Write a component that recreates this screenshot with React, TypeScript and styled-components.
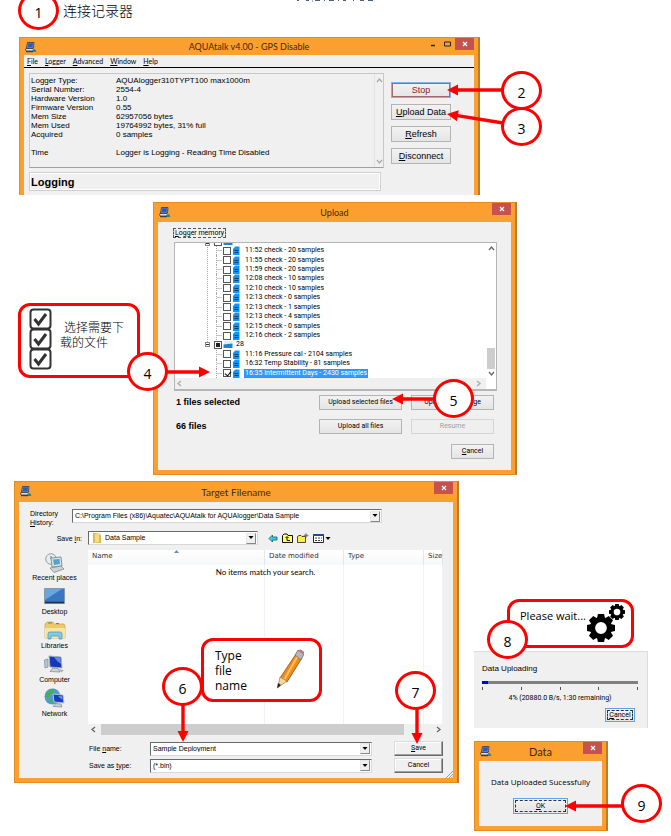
import React, { useState } from 'react';
import styled, { createGlobalStyle, css } from 'styled-components';

const GlobalStyle = createGlobalStyle`
  * { box-sizing: border-box; }
  body { margin: 0; background: #fff; color: #000; overflow-x: hidden; }
  button, input, select { font: inherit; color: inherit; margin: 0; }
`;

const ui = '"Open Sans", "Noto Sans", sans-serif';
const caption = 'Lato, "Open Sans", sans-serif';
const sans = '"Liberation Sans", Arial, sans-serif';
const narrow = 'Roboto, "Liberation Sans", sans-serif';
const cjk = '"Noto Sans CJK SC", sans-serif';
const RED = '#fd0000';

/* ---------- page ---------- */

const Page = styled.main`
  position: relative;
  overflow: hidden;
  padding-bottom: 5px;
  font-family: ${sans};
  font-size: 8px;
  line-height: 9px;
`;

const Intro = styled.header`
  position: relative;
  height: 37px;
  padding: 0 0 0 63px;
`;

const IntroTitle = styled.h1`
  margin: 0;
  font: 300 14px/20px ${cjk};
`;

const Traces = styled.svg`
  position: absolute;
  top: 0;
  left: 297px;
`;

const Figure = styled.section<{ $left: number; $width: number; $top?: number }>`
  position: relative;
  width: 100%;
  max-width: ${p => p.$width}px;
  margin-left: ${p => p.$left}px;
  margin-top: ${p => p.$top || 0}px;
`;

const BottomRow = styled.div`
  display: flex;
  align-items: flex-start;
  gap: 15px;
  margin: 6px 0 0 14px;
`;

const SideColumn = styled.div`
  flex: 0 1 174px;
  padding-top: 170px;
`;

/* ---------- annotations ---------- */

const Marker = styled.span<{ $x: number; $y: number }>`
  position: absolute;
  left: ${p => p.$x}px;
  top: ${p => p.$y}px;
  z-index: 3;
  display: flex;
  align-items: center;
  justify-content: center;
  width: 41px;
  height: 39px;
  padding-top: 4px;
  border: 3px solid ${RED};
  border-radius: 50%;
  background: #fff;
  font: 14px/16px ${ui};
`;

const ArrowSvg = styled.svg<{ $x: number; $y: number }>`
  position: absolute;
  left: ${p => p.$x}px;
  top: ${p => p.$y}px;
  z-index: 2;
  overflow: visible;
`;

type ArrowProps = { x: number; y: number; dx: number; dy: number };

/* x,y is the tip; dx,dy leads back to the tail */
function Arrow({ x, y, dx, dy }: ArrowProps) {
  const length = Math.hypot(dx, dy);
  const angle = (Math.atan2(dy, dx) * 180) / Math.PI;
  return (
    <ArrowSvg $x={x} $y={y} width="1" height="1" aria-hidden="true">
      <g transform={`rotate(${angle})`} fill={RED}>
        <path d="M0 0 11-5.5V5.5Z" />
        <path d={`M9-1.7H${length}V1.7H9Z`} />
      </g>
    </ArrowSvg>
  );
}

const Callout = styled.aside<{ $x: number; $y: number; $w: number; $h: number }>`
  position: absolute;
  left: ${p => p.$x}px;
  top: ${p => p.$y}px;
  z-index: 1;
  display: flex;
  width: ${p => p.$w}px;
  height: ${p => p.$h}px;
  border: 3px solid ${RED};
  border-radius: 12px;
  background: #fff;
`;

const PickText = styled.p`
  margin: 13px 0 0 7px;
  font: 300 12px/15px ${cjk};
  text-indent: 4px;
`;

const TypeText = styled.p`
  width: 44px;
  margin: 7px 16px 0 11px;
  font: 12px/15px ${ui};
`;

const WaitText = styled.p`
  margin: 6px 0 0 10px;
  font: 11px/15px ${ui};
  white-space: nowrap;
`;

const ChecksSvg = styled.svg`
  margin: 2px 0 0 8px;
  flex: none;
`;

const PencilSvg = styled.svg`
  margin-top: 8px;
`;

const GearsSvg = styled.svg`
  position: absolute;
  right: 5px;
  top: 0;
`;

/* ---------- window frame ---------- */

const Frame = styled.div<{ $open?: boolean }>`
  padding: 0 4px ${p => (p.$open ? 0 : 4)}px 4px;
  border: solid #e28c22;
  border-width: 1px 2px ${p => (p.$open ? 0 : 1)}px 1px;
  border-right-color: #bd7a27;
  background: #fc9f31;
`;

const TitleBar = styled.div<{ $h: number }>`
  position: relative;
  display: flex;
  align-items: center;
  justify-content: center;
  height: ${p => p.$h}px;
  color: #3f2a10;
`;

const Title = styled.h2<{ $size?: number }>`
  margin: 0;
  font: ${p => p.$size || 9}px/14px ${caption};
`;

const TitleIcon = styled.svg`
  position: absolute;
  left: 1px;
  top: 4px;
`;

const WindowButtons = styled.div`
  position: absolute;
  right: 0;
  top: 0;
  display: flex;
`;

const CaptionButton = styled.button<{ $close?: boolean }>`
  display: flex;
  align-items: center;
  justify-content: center;
  width: ${p => (p.$close ? 19 : 15)}px;
  height: 12px;
  padding: 0;
  border: 0;
  background: ${p => (p.$close ? '#c75050' : 'transparent')};
`;

const Client = styled.div`
  background: #f0f0f0;
`;

function PcIcon() {
  return (
    <TitleIcon width="12" height="11" viewBox="0 0 12 11" aria-hidden="true">
      <path d="M2.5.5H9L8.5 6H1.5Z" fill="#8fa5b6" stroke="#293b55" strokeWidth=".8" />
      <path d="M3.3 1.3H8L7.6 5H2.6Z" fill="#2559c8" />
      <path d="M1 6.5H8L10.5 9H1.5L.5 8Z" fill="#d9e0e5" stroke="#27313f" strokeWidth=".8" />
      <path d="M7 8 10 7 11.5 10H8Z" fill="#258a93" />
      <path d="M1 9.7H8" stroke="#27313f" />
    </TitleIcon>
  );
}

function CloseButton() {
  return (
    <CaptionButton $close aria-label="Close">
      <svg width="6" height="6" viewBox="0 0 6 6"><path d="M1 1 5 5M5 1 1 5" stroke="#fff" strokeWidth="1.2" /></svg>
    </CaptionButton>
  );
}

/* ---------- controls ---------- */

const Button = styled.button<{ $w?: number; $h?: number; $look?: 'focus' | 'classic'; $size?: number; $stop?: boolean }>`
  display: flex;
  align-items: center;
  justify-content: center;
  width: ${p => (p.$w ? p.$w + 'px' : '100%')};
  height: ${p => p.$h || 15}px;
  padding: 0;
  border: 1px solid #b4b4b4;
  background: linear-gradient(#f2f2f2, #e5e5e5);
  white-space: nowrap;
  font-family: ${p => ((p.$size || 7) > 8 ? sans : narrow)};
  font-size: ${p => p.$size || 7}px;
  line-height: 11px;
  &:disabled { color: #a0a0a0; border-color: #d5d5d5; background: #efefef; }
  ${p => p.$look === 'focus' && css`
    border-color: #5aa5ea;
    outline: 1px dashed #333;
    outline-offset: -3px;
  `}
  ${p => p.$look === 'classic' && css`
    border: 1px solid;
    border-color: #dcdcdc #696969 #696969 #dcdcdc;
    box-shadow: inset -1px -1px #a0a0a0, inset 1px 1px #fff;
    background: #f0f0f0;
  `}
  ${p => p.$stop && css`
    color: #8b1a1a;
    border-color: #7eb4ea;
    box-shadow: inset 0 0 0 1px #a56a70;
  `}
`;

/* ---------- logger window ---------- */

const MenuBar = styled.nav`
  display: flex;
  gap: 7px;
  height: 13px;
  padding-left: 3px;
  border-bottom: 1px solid #000;
`;

const MenuItem = styled.button`
  padding: 0;
  border: 0;
  background: none;
  font: 7px/11px ${caption};
`;

const LoggerBody = styled.div`
  display: grid;
  grid-template-columns: 1fr 60px;
  gap: 7px;
  padding: 5px 23px 4px 5px;
`;

const LoggerMain = styled.div`
  display: flex;
  flex-direction: column;
  gap: 4px;
`;

const InfoPanel = styled.div`
  display: flex;
  justify-content: space-between;
  height: 95px;
  border: 1px solid #c8c8c8;
  border-bottom-color: #a0a0a0;
`;

const InfoTable = styled.table`
  margin: 2px 1px 0;
  border-collapse: collapse;
  align-self: flex-start;
  th, td { padding: 0; height: 9px; font-weight: normal; text-align: left; white-space: nowrap; }
  th { width: 85px; }
  tr:last-child th, tr:last-child td { padding-top: 9px; }
`;

const ThinScroll = styled.div`
  display: flex;
  flex-direction: column;
  justify-content: space-between;
  align-items: center;
  width: 9px;
  padding: 3px 0 2px;
  border-left: 1px solid #e2e2e2;
`;

const StatusBox = styled.div`
  height: 19px;
  margin-right: 3px;
  padding-left: 1px;
  border: 1px solid #d0d0d0;
  box-shadow: inset 0 0 0 1px #fff;
  font: bold 11px/18px ${sans};
`;

const LoggerButtons = styled.div`
  display: flex;
  flex-direction: column;
  gap: 6px;
  padding-top: 9px;
`;

function Chevron({ dir, color = '#666' }: { dir: 'up' | 'down' | 'left' | 'right'; color?: string }) {
  const paths = { up: 'M1 5 3.5 2 6 5', down: 'M1 2 3.5 5 6 2', left: 'M5 1 2 3.5 5 6', right: 'M2 1 5 3.5 2 6' };
  return <svg width="7" height="7" viewBox="0 0 7 7" aria-hidden="true"><path d={paths[dir]} fill="none" stroke={color} strokeWidth="1.3" /></svg>;
}

const info = [
  ['Logger Type:', 'AQUAlogger310TYPT100 max1000m'],
  ['Serial Number:', '2554-4'],
  ['Hardware Version', '1.0'],
  ['Firmware Version', '0.55'],
  ['Mem Size', '62957056 bytes'],
  ['Mem Used', '19764992 bytes, 31% full'],
  ['Acquired', '0 samples'],
  ['Time', 'Logger is Logging - Reading Time Disabled'],
];

function LoggerWindow() {
  return (
    <Frame $open>
      <TitleBar $h={17}>
        <PcIcon />
        <Title>AQUAtalk v4.00 - GPS Disable</Title>
        <WindowButtons>
          <CaptionButton aria-label="Minimize">
            <svg width="6" height="6"><path d="M1 4.5H5" stroke="#222" strokeWidth="1.4" /></svg>
          </CaptionButton>
          <CaptionButton aria-label="Maximize">
            <svg width="7" height="6"><path d="M.5 1H6.5V5H.5Z" fill="none" stroke="#222" /></svg>
          </CaptionButton>
          <CloseButton />
        </WindowButtons>
      </TitleBar>
      <Client>
        <MenuBar>
          <MenuItem><u>F</u>ile</MenuItem>
          <MenuItem><u>L</u>ogger</MenuItem>
          <MenuItem><u>A</u>dvanced</MenuItem>
          <MenuItem><u>W</u>indow</MenuItem>
          <MenuItem><u>H</u>elp</MenuItem>
        </MenuBar>
        <LoggerBody>
          <LoggerMain>
            <InfoPanel>
              <InfoTable>
                <tbody>
                  {info.map(([k, v]) => <tr key={k}><th scope="row">{k}</th><td>{v}</td></tr>)}
                </tbody>
              </InfoTable>
              <ThinScroll><Chevron dir="up" color="#aaa" /><Chevron dir="down" color="#aaa" /></ThinScroll>
            </InfoPanel>
            <StatusBox>Logging</StatusBox>
          </LoggerMain>
          <LoggerButtons>
            <Button $h={16} $size={9} $stop>Stop</Button>
            <Button $h={16} $size={9}><span><u>U</u>pload Data</span></Button>
            <Button $h={16} $size={9}><span><u>R</u>efresh</span></Button>
            <Button $h={16} $size={9}><span><u>D</u>isconnect</span></Button>
          </LoggerButtons>
        </LoggerBody>
      </Client>
    </Frame>
  );
}

/* ---------- upload window ---------- */

const UploadBody = styled(Client)`
  padding: 6px 14px 11px 15px;
  font: 7px/9px ${narrow};
`;

const GroupLabel = styled.h3`
  width: max-content;
  height: 10px;
  margin: 0 0 4px;
  padding: 0 1px;
  border: 1px dashed #555;
  font: 7px/8px ${narrow};
`;

const Tree = styled.div`
  display: grid;
  grid-template: 1fr 11px / 1fr 10px;
  height: 149px;
  margin-left: 1px;
  border: 1px solid #b5b5b5;
  border-width: 1px 1px 2px 1px;
  background: #fff;
`;

const TreeRows = styled.ul`
  display: grid;
  grid-template-rows: 3px;
  grid-auto-rows: 1fr;
  margin: 0;
  padding: 0 0 0 30px;
  list-style: none;
  overflow: hidden;
  background: repeating-linear-gradient(#aaa 0 1px, #fff 1px 2px) 32px 0 / 1px 100px no-repeat;
`;

const TreeRow = styled.li<{ $parent?: boolean; $cut?: boolean }>`
  display: flex;
  align-items: ${p => (p.$cut ? 'flex-end' : 'center')};
  padding-left: ${p => (p.$parent ? 0 : 11)}px;
  min-height: 0;
  ${p => p.$cut && 'overflow: hidden;'}
  > svg { flex: none; }
  &::before {
    content: '';
    flex: none;
    width: ${p => (p.$parent ? 0 : 6)}px;
    align-self: stretch;
    border-left: ${p => (p.$parent ? 0 : 1)}px dotted #aaa;
    background: linear-gradient(#c8c8c8, #c8c8c8) 0 50% / 5px 1px no-repeat;
  }
`;

const Expander = styled.button`
  display: flex;
  flex: none;
  width: 5px;
  height: 5px;
  margin-right: 4px;
  padding: 0;
  border: 1px solid #888;
  background: linear-gradient(#333, #333) 50% 50% / 3px 1px no-repeat, #fff;
`;

const TreeCheck = styled.input<{ $mixed?: boolean }>`
  appearance: none;
  position: relative;
  flex: none;
  width: 8px;
  height: 8px;
  margin-right: 1px;
  border: 1px solid #555;
  background: #fff;
  &:checked::after {
    content: '';
    position: absolute;
    left: 2px;
    top: 0;
    width: 3px;
    height: 5px;
    border: solid #000;
    border-width: 0 1px 1px 0;
    transform: rotate(40deg);
  }
  ${p => p.$mixed && css`
    background: linear-gradient(#222, #222) 50% 50% / 4px 4px no-repeat, #fff;
    &:checked::after { display: none; }
  `}
`;

const TreeLabel = styled.label<{ $selected?: boolean; $near?: boolean }>`
  padding: 0 1px;
  margin-left: ${p => (p.$near ? 2 : 4)}px;
  white-space: nowrap;
  line-height: 9px;
  ${p => p.$selected && css`
    color: #fff;
    background: #3399ff;
    outline: 1px dotted #c56a10;
    outline-offset: -1px;
  `}
`;

const VScroll = styled.div`
  display: flex;
  flex-direction: column;
  align-items: center;
  padding: 2px 0 1px;
`;

const VThumb = styled.div`
  width: 8px;
  height: 21px;
  margin-top: auto;
  margin-bottom: 1px;
  background: #cdcdcd;
`;

const HScroll = styled.div`
  display: flex;
  align-items: center;
  justify-content: space-between;
  padding: 0 4px 0 1px;
  background: #f0f0f0;
`;

const UploadActions = styled.div`
  display: grid;
  grid-template-columns: 1fr 83px 83px;
  gap: 9px;
  align-items: center;
  margin: 4px 3px 10px 3px;
`;

const Count = styled.strong`
  font: bold 9px/11px ${sans};
`;

const RightAlign = styled.div`
  display: flex;
  justify-content: flex-end;
  margin-right: 3px;
`;

function FileIcon() {
  return (
    <svg width="8" height="9" viewBox="0 0 8 9" aria-hidden="true">
      <path d="M3 .5H7.500V9H1V3Z" fill="#1494f4" />
      <path d="M2.500 4.5H6.500M2.500 6.500H6.500" stroke="#03426f" />
    </svg>
  );
}

function DayIcon() {
  return (
    <svg width="10" height="9" viewBox="0 0 10 9" aria-hidden="true">
      <path d="M1 1H9V8H1Z" fill="#d8eefc" />
      <path d="M.5 4.500 9.500 3.500V8H.5Z" fill="#1683dc" />
    </svg>
  );
}

const checks = [
  '11:52 check - 20 samples', '11:55 check - 20 samples', '11:59 check - 20 samples', '12:08 check - 10 samples',
  '12:10 check - 10 samples', '12:13 check - 0 samples', '12:13 check - 1 samples', '12:13 check - 4 samples',
  '12:15 check - 0 samples', '12:16 check - 2 samples',
];
const days = ['11:16 Pressure cal - 2104 samples', '16:32 Temp Stability - 81 samples', '16:35 Intermittent Days - 2430 samples'];

function TreeItem({ text, selected }: { text: string; selected?: boolean }) {
  const id = 'file-' + text.replace(/\W+/g, '-');
  return (
    <TreeRow>
      <TreeCheck type="checkbox" id={id} defaultChecked={selected} />
      <FileIcon />
      <TreeLabel htmlFor={id} $selected={selected}>{text}</TreeLabel>
    </TreeRow>
  );
}

function UploadWindow() {
  return (
    <Frame>
      <TitleBar $h={19}>
        <PcIcon />
        <Title>Upload</Title>
        <WindowButtons><CloseButton /></WindowButtons>
      </TitleBar>
      <UploadBody>
        <GroupLabel><u>L</u>ogger memory</GroupLabel>
        <Tree>
          <TreeRows>
            <TreeRow $parent $cut>
              <Expander aria-label="Collapse day" />
              <TreeCheck type="checkbox" aria-label="Day" />
              <DayIcon />
            </TreeRow>
            {checks.map(t => <TreeItem key={t} text={t} />)}
            <TreeRow $parent>
              <Expander aria-label="Collapse 28" />
              <TreeCheck type="checkbox" id="day-28" defaultChecked $mixed />
              <DayIcon />
              <TreeLabel htmlFor="day-28" $near>28</TreeLabel>
            </TreeRow>
            {days.map((t, i) => <TreeItem key={t} text={t} selected={i === 2} />)}
          </TreeRows>
          <VScroll><Chevron dir="up" /><VThumb /><Chevron dir="down" /></VScroll>
          <HScroll><Chevron dir="left" color="#aaa" /><Chevron dir="right" color="#aaa" /></HScroll>
        </Tree>
        <UploadActions>
          <Count>1 files selected</Count>
          <Button>Upload selected files</Button>
          <Button>Upload date range</Button>
          <Count>66 files</Count>
          <Button>Upload all files</Button>
          <Button disabled>Resume</Button>
        </UploadActions>
        <RightAlign><Button $w={43}><span><u>C</u>ancel</span></Button></RightAlign>
      </UploadBody>
    </Frame>
  );
}

/* ---------- save dialog ---------- */

const SaveBody = styled(Client)`
  position: relative;
  padding: 7px 9px 5px;
  font: 7px/9px ${sans};
`;

const DirectoryRow = styled.div`
  display: grid;
  grid-template-columns: 42px minmax(0, 310px);
  align-items: start;
  padding-left: 2px;
`;

const SaveInRow = styled.div`
  display: grid;
  grid-template-columns: 56px minmax(0, 170px) auto;
  gap: 4px;
  align-items: center;
  margin: 4px 0 5px;
  > label { text-align: right; padding-right: 2px; }
`;

const Combo = styled.div`
  display: flex;
  align-items: center;
  height: 14px;
  padding: 1px;
  border: 1px solid;
  border-color: #696969 #d8d8d8 #d8d8d8 #696969;
  background: #fff;
`;

const Select = styled.select`
  appearance: none;
  flex: 1;
  min-width: 0;
  height: 10px;
  padding: 0 1px;
  border: 0;
  background: transparent;
  line-height: 10px;
`;

const Input = styled.input`
  flex: 1;
  min-width: 0;
  height: 10px;
  padding: 0 1px;
  border: 0;
  background: transparent;
  outline: none;
`;

const DropBox = styled.span`
  display: flex;
  align-items: center;
  justify-content: center;
  width: 10px;
  height: 11px;
  border: 1px solid;
  border-color: #e8e8e8 #888 #888 #e8e8e8;
  background: #f0f0f0;
`;

const Tools = styled.div`
  display: flex;
  gap: 4px;
  margin-left: 6px;
`;

const ToolButton = styled.button`
  display: flex;
  padding: 0;
  border: 0;
  background: none;
`;

const SaveMain = styled.div`
  display: grid;
  grid-template-columns: 56px minmax(0, 1fr);
  gap: 4px;
`;

const Places = styled.nav`
  display: grid;
  grid-template-rows: repeat(5, 34px);
  margin-left: -3px;
`;

const Place = styled.button`
  display: flex;
  flex-direction: column;
  align-items: center;
  justify-content: flex-end;
  padding: 0 0 2px;
  border: 0;
  background: none;
  line-height: 9px;
  white-space: nowrap;
  svg { flex: none; }
`;

const FileArea = styled.div`
  position: relative;
  display: flex;
  flex-direction: column;
  min-width: 0;
  margin-right: 1px;
`;

const FileTable = styled.table`
  width: 100%;
  height: 174px;
  border-collapse: collapse;
  table-layout: fixed;
  background: #fff;
  th {
    height: 15px;
    padding: 0 0 2px 4px;
    border-right: 1px solid #dfe8f2;
    background: linear-gradient(#fff, #f6f7f9);
    font: 7px/11px "DejaVu Sans", sans-serif;
    color: #333;
    text-align: left;
  }
  td { padding: 0; border-right: 1px solid #eef3f9; }
`;

const SortMark = styled.svg`
  position: absolute;
  left: 86px;
  top: 0;
`;

const EmptyNote = styled.p`
  position: absolute;
  inset: 17px 0 auto;
  margin: 0;
  font: 8px/11px ${caption};
  text-align: center;
`;

const ListScroll = styled.div`
  display: grid;
  grid-template-columns: 11px 1fr 39px;
  align-items: center;
  height: 11px;
  padding-left: 2px;
  > div { height: 11px; background: #cdcdcd; }
  > svg:last-child { justify-self: end; margin-right: 1px; }
`;

const NameGrid = styled.div`
  display: grid;
  grid-template-columns: 57px minmax(0, 1fr) 49px;
  gap: 2px 4px;
  align-items: center;
  padding: 6px 1px 0 61px;
`;

const ComboSlot = styled.div`
  padding-right: 18px;
`;

const Grip = styled.svg`
  position: absolute;
  right: 0;
  bottom: 0;
`;

function Drop() {
  return <DropBox aria-hidden="true"><svg width="6" height="4"><path d="M.5 0H5.500L3 3Z" fill="#000" /></svg></DropBox>;
}

function RecentIcon() {
  return (
    <svg width="21" height="20" viewBox="0 0 21 20" aria-hidden="true">
      <circle cx="7" cy="6" r="5.3" fill="#e6edf0" stroke="#93a0a6" />
      <path d="M7 3V6H9.500" stroke="#3f718f" fill="none" />
      <path d="M7 5 17 4 18 13 8 14Z" fill="#d9e3e8" stroke="#85949b" />
      <path d="M9 6.500 15.500 6 16 11 10 12Z" fill="#4fa5cf" />
      <path d="M6 15 17 13 20 16 10 19.500Z" fill="#cbd1d4" stroke="#777f82" strokeWidth=".7" />
    </svg>
  );
}
function DesktopIcon() {
  return (
    <svg width="21" height="19" viewBox="0 0 21 19" aria-hidden="true">
      <path d="M.5.5H20.500V15.500H.5Z" fill="#3a76c2" stroke="#8799a6" />
      <path d="M1 1H18Q10 6 1 12Z" fill="#6aa5df" />
      <path d="M1 14.500H20" stroke="#20323f" strokeWidth="1.500" />
    </svg>
  );
}
function LibrariesIcon() {
  return (
    <svg width="22" height="20" viewBox="0 0 22 20" aria-hidden="true">
      <path d="M1 3 3 1H9L10 3H20L21 5V17H1Z" fill="#ecca6a" stroke="#c2a355" strokeWidth=".7" />
      <path d="M4 2H8" stroke="#4a9b4c" /><path d="M12 2.500H15" stroke="#d65e3e" />
      <path d="M1 7H21V17H1Z" fill="#f8e5a4" />
      <path d="M4 18V13Q4 11 6 11H16Q18 11 18 13V18H15V15H7V18Z" fill="#86c9e6" stroke="#4c9dc3" strokeWidth=".8" />
    </svg>
  );
}
function ComputerIcon() {
  return (
    <svg width="21" height="20" viewBox="0 0 21 20" aria-hidden="true">
      <path d="M.5 5 4 4V12L1 13Z" fill="#b8c7d1" stroke="#788791" strokeWidth=".7" />
      <path d="M5 1 17 2 18 13 6 12Z" fill="#1537b8" stroke="#9fb1bd" />
      <path d="M10 2 16.500 2.500 17 9Q13 7 10 2Z" fill="#6387ea" />
      <path d="M9 13 14 13.500 16 17 6 16.500Z" fill="#cdd4d8" stroke="#7e878d" strokeWidth=".7" />
      <path d="M15 14 20 15.500 17 17.500Z" fill="#a6afb4" />
    </svg>
  );
}
function NetworkIcon() {
  return (
    <svg width="21" height="21" viewBox="0 0 21 21" aria-hidden="true">
      <circle cx="8.500" cy="8.500" r="8" fill="#4f9cd0" />
      <path d="M3 4Q7 0 11 1L9 5 6 6 5 10 1 9ZM4 13 8 11 9 16Z" fill="#4cae51" />
      <path d="M9 6 19 7 20 15 10 14Z" fill="#1a3dbd" stroke="#b5c4cf" />
      <path d="M14 8 18 8.300 18.500 12Z" fill="#7595ea" />
      <path d="M12 15.500 17 16 18 19 9 18.500Z" fill="#c7ced2" stroke="#818b91" strokeWidth=".7" />
    </svg>
  );
}

const places: [string, () => React.ReactElement][] = [
  ['Recent places', RecentIcon], ['Desktop', DesktopIcon], ['Libraries', LibrariesIcon],
  ['Computer', ComputerIcon], ['Network', NetworkIcon],
];

function SaveWindow() {
  const [name, setName] = useState('Sample Deployment');
  return (
    <Frame>
      <TitleBar $h={20}>
        <PcIcon />
        <Title $size={10}>Target Filename</Title>
        <WindowButtons><CloseButton /></WindowButtons>
      </TitleBar>
      <SaveBody>
        <DirectoryRow>
          <label htmlFor="directory">Directory<br /><u>H</u>istory:</label>
          <Combo>
            <Select id="directory"><option>C:\Program Files (x86)\Aquatec\AQUAtalk for AQUAlogger\Data Sample</option></Select>
            <Drop />
          </Combo>
        </DirectoryRow>
        <SaveInRow>
          <label htmlFor="savein">Save <u>i</u>n:</label>
          <Combo>
            <svg width="14" height="12" viewBox="0 0 14 12" aria-hidden="true">
              <path d="M3 1H8L11 3V11H3Z" fill="#dfb84f" /><path d="M5 2 9 1V10L5 11Z" fill="#f7dc86" />
            </svg>
            <Select id="savein"><option>Data Sample</option></Select>
            <Drop />
          </Combo>
          <Tools>
            <ToolButton aria-label="Back">
              <svg width="10" height="11"><path d="M1 5.500 4.500 2V4H9V7H4.500V9Z" fill="#35d0dc" stroke="#145a68" strokeWidth=".8" /></svg>
            </ToolButton>
            <ToolButton aria-label="Up one level">
              <svg width="11" height="11"><path d="M.5 2.500 2 1H5L6 2.500H10.500V9.500H.5Z" fill="#ffff70" stroke="#111" /><path d="M3.500 5 5 3.500 6.500 5M5 4V7.500H8" fill="none" stroke="#111" /></svg>
            </ToolButton>
            <ToolButton aria-label="New folder">
              <svg width="12" height="11"><path d="M.5 3.500 2 2.500H4L5 3.500H8.500V9.500H.5Z" fill="#ffef4a" stroke="#222" strokeWidth=".8" /><path d="M9 0V5M6.500 2.500H11.500M7.500 1 10.500 4M10.500 1 7.500 4" stroke="#555" strokeWidth=".6" /></svg>
            </ToolButton>
            <ToolButton aria-label="View">
              <svg width="18" height="11"><path d="M.5 1.500H10.500V9.500H.5Z" fill="#fff" stroke="#223" /><path d="M0 2H11" stroke="#154da0" strokeWidth="2" /><path d="M2 5H9M2 7.500H9" stroke="#444" strokeDasharray="2 1" /><path d="M12.500 4H17.500L15 7Z" /></svg>
            </ToolButton>
          </Tools>
        </SaveInRow>
        <SaveMain>
          <Places aria-label="Places">
            {places.map(([label, Icon]) => <Place key={label}><Icon />{label}</Place>)}
          </Places>
          <FileArea>
            <FileTable>
              <colgroup><col /><col width="79" /><col width="80" /><col width="19" /></colgroup>
              <thead><tr><th>Name</th><th>Date modified</th><th>Type</th><th>Size</th></tr></thead>
              <tbody><tr><td /><td /><td /><td /></tr></tbody>
            </FileTable>
            <SortMark width="5" height="4" aria-hidden="true"><path d="M0 3 2.500 0 5 3Z" fill="#5b93b8" /></SortMark>
            <EmptyNote>No items match your search.</EmptyNote>
            <ListScroll><Chevron dir="left" /><div /><Chevron dir="right" /></ListScroll>
          </FileArea>
        </SaveMain>
        <NameGrid>
          <label htmlFor="filename">File <u>n</u>ame:</label>
          <ComboSlot><Combo><Input id="filename" value={name} onChange={e => setName(e.target.value)} /><Drop /></Combo></ComboSlot>
          <Button $look="classic"><span><u>S</u>ave</span></Button>
          <label htmlFor="filetype">Save as <u>t</u>ype:</label>
          <ComboSlot><Combo><Select id="filetype"><option>(*.bin)</option></Select><Drop /></Combo></ComboSlot>
          <Button $look="classic">Cancel</Button>
        </NameGrid>
        <Grip width="7" height="7" aria-hidden="true"><path d="M0 7 7 0M3 7 7 3M5.500 7 7 5.500" stroke="#999" /></Grip>
      </SaveBody>
    </Frame>
  );
}

/* ---------- progress panel and done dialog ---------- */

const ProgressFigure = styled.div`
  position: relative;
`;

const ProgressPanel = styled.section`
  height: 77px;
  padding: 12px 9px 0 8px;
  border: solid #dcdcdc;
  border-width: 1px 1px 0 0;
  background: #f0f0f0;
`;

const PanelTitle = styled.h2`
  margin: 0 0 7px;
  font: 8px/10px ${sans};
`;

const Progress = styled.progress`
  appearance: none;
  display: block;
  width: 100%;
  height: 3px;
  border: 0;
  background: #808080;
  &::-webkit-progress-bar { background: #808080; }
  &::-webkit-progress-value { background: #0000e0; }
`;

const Ticks = styled.div`
  display: flex;
  justify-content: space-between;
  height: 3px;
  margin: 3px 0 3px;
  > i { width: 1px; background: #555; }
`;

const ProgressText = styled.p`
  margin: 0 0 5px;
  font: 7px/10px ${narrow};
  text-align: center;
`;

const DoneDialog = styled.div`
  position: relative;
  max-width: 134px;
  margin-top: 13px;
`;

const DoneBody = styled(Client)`
  display: flex;
  flex-direction: column;
  align-items: center;
  gap: 9px;
  height: 65px;
  padding-top: 14px;
  font: 8px/14px ${ui};
  white-space: nowrap;
`;

function Gear({ x, y, r }: { x: number; y: number; r: number }) {
  const teeth = [0, 45, 90, 135, 180, 225, 270, 315];
  const w = r * 0.22;
  return (
    <g transform={`translate(${x} ${y})`}>
      {teeth.map(a => <path key={a} transform={`rotate(${a})`} d={`M${-w} ${-r}H${w}L${w * 1.4} ${-r * 0.6}H${-w * 1.4}Z`} />)}
      <circle r={r * 0.6} fill="none" stroke="#000" strokeWidth={r * 0.36} />
    </g>
  );
}

export default function App() {
  return (
    <>
      <GlobalStyle />
      <Page>
        <Intro>
          <Traces width="80" height="2" aria-hidden="true">
            <path d="M0 .5H2M9 .5H12M15 1H16M18 .5H23M27 .5H28M32 .5H37M41 .5H42M46 .5H49M56 .5H57M63 .5H67M71 .5H76" stroke="#4d6076" />
          </Traces>
          <Marker $x={18} $y={-9}>1</Marker>
          <IntroTitle>连接记录器</IntroTitle>
        </Intro>

        <Figure $left={19} $width={461}>
          <LoggerWindow />
          <Arrow x={428} y={53} dx={56} dy={0} />
          <Arrow x={428} y={77} dx={56} dy={9} />
          <Marker $x={482} $y={34}>2</Marker>
          <Marker $x={482} $y={70}>3</Marker>
        </Figure>

        <Figure $left={153} $width={364} $top={7}>
          <UploadWindow />
          <Callout $x={-135} $y={101} $w={122} $h={75}>
            <ChecksSvg width="24" height="62" viewBox="0 0 24 62" aria-hidden="true">
              {[0, 20, 40].map(y => (
                <g key={y} transform={`translate(0 ${y})`} fill="none" stroke="#333">
                  <rect x="1.500" y="1.500" width="20" height="19" rx="3" strokeWidth="2" />
                  <path d="M5.500 11 9.500 16 17 6" strokeWidth="3" />
                </g>
              ))}
            </ChecksSvg>
            <PickText>选择需要下<br />载的文件</PickText>
          </Callout>
          <Arrow x={57} y={170} dx={-45} dy={0} />
          <Arrow x={239} y={197} dx={43} dy={0} />
          <Marker $x={-26} $y={150}>4</Marker>
          <Marker $x={280} $y={177}>5</Marker>
        </Figure>

        <BottomRow>
          <Figure $left={0} $width={445}>
            <SaveWindow />
            <Callout $x={187} $y={157} $w={121} $h={64}>
              <TypeText>Type file name</TypeText>
              <PencilSvg width="29" height="40" viewBox="0 0 29 40" aria-hidden="true">
                <path d="M21 5 27 9 12 33 5 29Z" fill="#f28a16" stroke="#8a4a0e" strokeWidth=".8" />
                <path d="M23 6.500 9 31" stroke="#ffc069" strokeWidth="2" />
                <path d="M20 6 23 1 29 5 26 11Z" fill="#b4b7ba" stroke="#6e7073" strokeWidth=".8" />
                <path d="M23 2Q25-1 28 2T28.500 5Z" fill="#c87383" />
                <path d="M5 28 12 32 3 38.500Z" fill="#f3d79f" stroke="#8b6a40" strokeWidth=".6" />
                <path d="M3 34 6 36 2 39.500Z" fill="#222" />
              </PencilSvg>
            </Callout>
            <Arrow x={169} y={261} dx={0} dy={-38} />
            <Arrow x={403} y={263} dx={0} dy={-37} />
            <Marker $x={148} $y={186}>6</Marker>
            <Marker $x={381} $y={190}>7</Marker>
          </Figure>

          <SideColumn>
            <ProgressFigure>
              <ProgressPanel>
                <PanelTitle id="uploading">Data Uploading</PanelTitle>
                <Progress value={4} max={100} aria-labelledby="uploading" />
                <Ticks><i /><i /><i /><i /><i /></Ticks>
                <ProgressText>4% (20880.0 B/s, 1:30 remaining)</ProgressText>
                <RightAlign><Button $w={30} $h={14} $look="focus"><span><u>C</u>ancel</span></Button></RightAlign>
              </ProgressPanel>
              <Callout $x={33} $y={-52} $w={127} $h={49}>
                <WaitText>Please wait...</WaitText>
                <GearsSvg width="40" height="42" viewBox="0 0 40 42" aria-hidden="true">
                  <Gear x={15} y={26} r={14} />
                  <Gear x={31} y={10} r={8} />
                </GearsSvg>
              </Callout>
              <Marker $x={13} $y={-31}>8</Marker>
            </ProgressFigure>
            <DoneDialog>
              <Frame>
                <TitleBar $h={19}>
                  <PcIcon />
                  <Title $size={11}>Data</Title>
                  <WindowButtons><CloseButton /></WindowButtons>
                </TitleBar>
                <DoneBody>
                  Data Uploaded Sucessfully
                  <Button $w={55} $h={16} $look="focus"><span><u>O</u>K</span></Button>
                </DoneBody>
              </Frame>
              <Arrow x={91} y={65} dx={58} dy={0} />
              <Marker $x={147} $y={43}>9</Marker>
            </DoneDialog>
          </SideColumn>
        </BottomRow>
      </Page>
    </>
  );
}
